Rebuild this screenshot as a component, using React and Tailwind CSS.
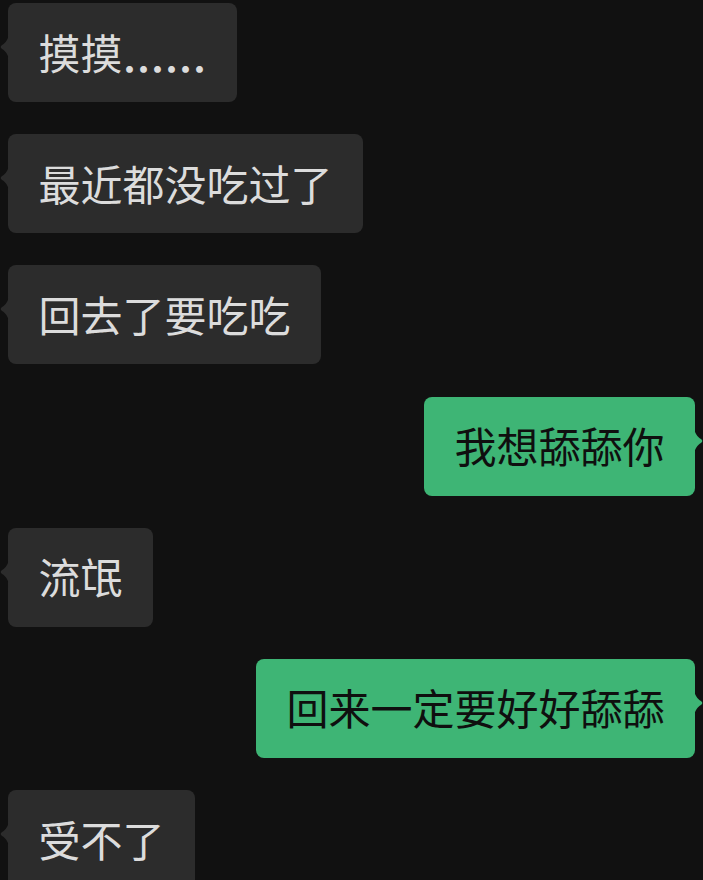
import React from "react";

const msgs = [
  { side: "l", text: "摸摸", dots: "……" },
  { side: "l", text: "最近都没吃过了" },
  { side: "l", text: "回去了要吃吃" },
  { side: "r", text: "我想舔舔你" },
  { side: "l", text: "流氓" },
  { side: "r", text: "回来一定要好好舔舔" },
  { side: "l", text: "受不了" },
];

function TailLeft() {
  return (
    <svg className="absolute left-[-8px] top-[28px]" width="9" height="32" viewBox="0 0 9 32">
      <path d="M9 0 C9 7 7 10 3 13.5 C0 15 0 17 3 18.5 C7 22 9 25 9 32 Z" fill="#2c2c2c" />
    </svg>
  );
}

function TailRight() {
  return (
    <svg className="absolute right-[-8px] top-[28px]" width="9" height="32" viewBox="0 0 9 32">
      <path d="M0 0 C0 7 2 10 6 13.5 C9 15 9 17 6 18.5 C2 22 0 25 0 32 Z" fill="#3eb575" />
    </svg>
  );
}

export default function App() {
  return (
    <div
      className="w-[703px] h-[880px] overflow-hidden bg-[#111111] px-[8px] pt-[3px] flex flex-col gap-[32.2px]"
      style={{ fontFamily: '"Noto Sans CJK SC", "Noto Sans", sans-serif' }}
    >
      {msgs.map((m, i) => (
        <div key={i} className={m.side === "l" ? "flex justify-start shrink-0" : "flex justify-end shrink-0"}>
          {m.side === "l" ? (
            <div className="relative h-[99px] flex items-center rounded-[8px] bg-[#2c2c2c] px-[30.5px] text-[42px] leading-[42px] text-[#dcdcdc] pb-[2px]">
              <TailLeft />
              <span>
                {m.text}
                {m.dots && <span className="relative top-[15px] font-bold">{m.dots}</span>}
              </span>
            </div>
          ) : (
            <div className="relative h-[99px] flex items-center rounded-[8px] bg-[#3eb575] px-[30.5px] text-[42px] leading-[42px] text-[#0f0f0f] pb-[2px]">
              <TailRight />
              <span>{m.text}</span>
            </div>
          )}
        </div>
      ))}
    </div>
  );
}
